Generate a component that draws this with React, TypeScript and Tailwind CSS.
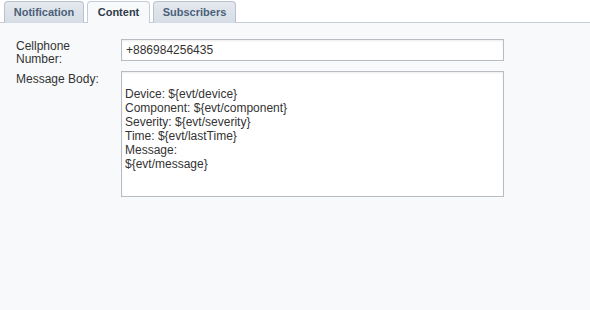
export default function App() {
  const tabs = [
    { label: "Notification", active: false, w: "w-[80px]" },
    { label: "Content", active: true, w: "w-[63px]" },
    { label: "Subscribers", active: false, w: "w-[83px]" },
  ];
  const body = "\nDevice: ${evt/device}\nComponent: ${evt/component}\nSeverity: ${evt/severity}\nTime: ${evt/lastTime}\nMessage:\n${evt/message}";
  return (
    <div className="w-[590px] h-[310px] bg-[#f8f9fa] font-['Liberation_Sans',Arial,sans-serif] text-[12px] text-[#333]">
      <div className="flex items-end gap-[3px] pl-[4px] pt-[1px] h-[23px] bg-white border-b border-[#c3ccd7]">
        {tabs.map((t) => (
          <div
            key={t.label}
            className={`${t.w} h-[22px] -mb-px flex items-center justify-center rounded-t-[4px] border border-b-0 text-[11px] font-bold ${
              t.active
                ? "bg-[#f8f9fa] border-[#c3ccd7] text-[#2f3b4a]"
                : "bg-gradient-to-b from-[#e4e8ee] to-[#d6dde6] border-[#b9c3cf] text-[#4b6079] border-b"
            }`}
          >
            {t.label}
          </div>
        ))}
      </div>
      <div className="pl-[16px] pt-[16px] flex flex-col gap-[10px]">
        <div className="flex items-start h-[22px]">
          <div className="w-[105px] pt-[1px] leading-[13px]">
            Cellphone
            <br />
            Number:
          </div>
          <div className="w-[383px] h-[22px] border border-[#b7bcc5] bg-white pl-[4px] flex items-center shadow-[inset_0_1px_2px_rgba(0,0,0,0.08)]">
            +886984256435
          </div>
        </div>
        <div className="flex">
          <div className="w-[105px] pt-[1px] leading-[14px]">Message Body:</div>
          <textarea
            readOnly
            value={body}
            className="w-[383px] h-[126px] border border-[#b7bcc5] bg-white px-[3px] pt-[1px] leading-[14px] text-[12px] text-[#333] resize-none outline-none shadow-[inset_0_1px_2px_rgba(0,0,0,0.08)] font-['Liberation_Sans',Arial,sans-serif]"
          />
        </div>
      </div>
    </div>
  );
}
